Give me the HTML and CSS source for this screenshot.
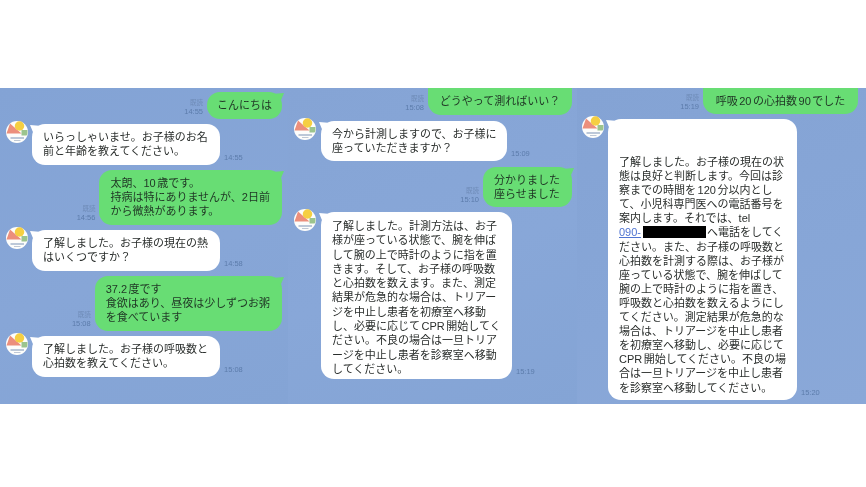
FILE: index.html
```html
<!doctype html>
<html lang="ja">
  <head>
    <meta charset="utf-8">
    <title>チャット</title>
    <link rel="stylesheet" href="styles.css">
  </head>
  <body>
    <svg class="defs" width="0" height="0">
      <symbol id="avatar" viewBox="0 0 44 44">
        <circle cx="22" cy="22" r="22" fill="#fdfdfb"/>
        <path d="M1 25 L8 5 L31 25 Z" fill="#ec8f7c"/>
        <circle cx="27" cy="10" r="9.5" fill="#f5cf42"/>
        <path d="M31 18 h12 v6 q0 3 -2 5 h-10 Z" fill="#9cc48e"/>
        <rect x="9" y="33" width="27" height="2" fill="#7d93b5"/>
        <rect x="16" y="38" width="13" height="1.5" fill="#aab6c9"/>
      </symbol>
    </svg>
    <main class="strip">
      <section class="chat chat-one">
        <div class="row mine">
          <div class="meta"><span class="read">既読</span><span>14:55</span></div>
          <div class="bubble green hello">こんにちは</div>
        </div>
        <div class="row theirs">
          <svg class="avatar"><use href="#avatar"/></svg>
          <div class="bubble white w-188">いらっしゃいませ。お子様のお名<br>前と年齢を教えてください。</div>
          <div class="meta"><span>14:55</span></div>
        </div>
        <div class="row mine">
          <div class="meta"><span class="read">既読</span><span>14:56</span></div>
          <div class="bubble green">太朗、10 歳です。<br>持病は特にありませんが、2日前<br>から微熱があります。</div>
        </div>
        <div class="row theirs">
          <svg class="avatar"><use href="#avatar"/></svg>
          <div class="bubble white w-188">了解しました。お子様の現在の熱<br>はいくつですか？</div>
          <div class="meta"><span>14:58</span></div>
        </div>
        <div class="row mine">
          <div class="meta"><span class="read">既読</span><span>15:08</span></div>
          <div class="bubble green">37.2 度です<br>食欲はあり、昼夜は少しずつお粥<br>を食べています</div>
        </div>
        <div class="row theirs">
          <svg class="avatar"><use href="#avatar"/></svg>
          <div class="bubble white w-188">了解しました。お子様の呼吸数と<br>心拍数を教えてください。</div>
          <div class="meta"><span>15:08</span></div>
        </div>
      </section>

      <section class="chat chat-two">
        <div class="row mine">
          <div class="meta"><span class="read">既読</span><span>15:08</span></div>
          <div class="bubble green cut w-144">どうやって測ればいい？</div>
        </div>
        <div class="row theirs">
          <svg class="avatar"><use href="#avatar"/></svg>
          <div class="bubble white w-186">今から計測しますので、お子様に<br>座っていただきますか？</div>
          <div class="meta"><span>15:09</span></div>
        </div>
        <div class="row mine">
          <div class="meta"><span class="read">既読</span><span>15:10</span></div>
          <div class="bubble green">分かりました<br>座らせました</div>
        </div>
        <div class="row theirs">
          <svg class="avatar"><use href="#avatar"/></svg>
          <div class="bubble white w-191 tall">了解しました。計測方法は、お子<br>様が座っている状態で、腕を伸ば<br>して腕の上で時計のように指を置<br>きます。そして、お子様の呼吸数<br>と心拍数を数えます。また、測定<br>結果が危急的な場合は、トリアー<br>ジを中止し患者を初療室へ移動<br>し、必要に応じて CPR 開始してく<br>ださい。不良の場合は一旦トリア<br>ージを中止し患者を診察室へ移動<br>してください。</div>
          <div class="meta"><span>15:19</span></div>
        </div>
      </section>

      <section class="chat chat-three">
        <div class="row mine">
          <div class="meta"><span class="read">既読</span><span>15:19</span></div>
          <div class="bubble green cut w-155">呼吸 20 の心拍数 90 でした</div>
        </div>
        <div class="row theirs">
          <svg class="avatar"><use href="#avatar"/></svg>
          <div class="bubble white w-189 long">了解しました。お子様の現在の状<br>態は良好と判断します。今回は診<br>察までの時間を 120 分以内とし<br>て、小児科専門医への電話番号を<br>案内します。それでは、tel<br><a class="phone" href="#">090-</a><span class="blackout"></span>へ電話をしてく<br>ださい。また、お子様の呼吸数と<br>心拍数を計測する際は、お子様が<br>座っている状態で、腕を伸ばして<br>腕の上で時計のように指を置き、<br>呼吸数と心拍数を数えるようにし<br>てください。測定結果が危急的な<br>場合は、トリアージを中止し患者<br>を初療室へ移動し、必要に応じて<br>CPR 開始してください。不良の場<br>合は一旦トリアージを中止し患者<br>を診察室へ移動してください。</div>
          <div class="meta"><span>15:20</span></div>
        </div>
      </section>
    </main>
  </body>
</html>
```

FILE: styles.css
```css
* {
  box-sizing: border-box;
}
html, body {
  margin: 0;
  height: 100%;
  background: #fff;
}
body {
  width: 866px;
  height: 487px;
  padding-top: 88px;
  overflow: hidden;
  font-family: "Liberation Sans", "Noto Sans CJK JP", sans-serif;
}
.defs {
  display: block;
  height: 0;
}
.strip {
  display: flex;
  height: 316px;
  filter: blur(0.35px);
}
.chat {
  display: flex;
  flex-direction: column;
  gap: 5px;
  overflow: hidden;
}
.chat-one {
  width: 288px;
  padding: 4px 6px 0 6px;
  background: linear-gradient(160deg, #83a3d5 0%, #87a6d7 55%, #84a4d5 100%);
}
.chat-two {
  width: 289px;
  padding: 0 5px 0 6px;
  gap: 6px;
  background: linear-gradient(160deg, #85a4d5 0%, #88a7d8 55%, #84a4d5 100%);
}
.chat-two .row:nth-child(4) {
  margin-top: -1px;
}
.chat-two .avatar {
  margin-right: 1px;
}
.chat-two .bubble {
  padding-bottom: 6px;
}
.chat-three {
  width: 289px;
  padding: 0 8px 0 5px;
  background: linear-gradient(160deg, #84a3d4 0%, #87a6d7 60%, #8aa8d8 100%);
}

.row {
  display: flex;
  align-items: flex-end;
  gap: 4px;
}
.mine {
  justify-content: flex-end;
}

.avatar {
  flex: none;
  align-self: flex-start;
  width: 22px;
  height: 22px;
  margin-top: -3px;
}

.bubble {
  position: relative;
  padding: 6px 12px 7px 11px;
  border-radius: 13px;
  font-size: 11px;
  line-height: 14px;
  word-spacing: -1.5px;
  color: #2a2e2c;
  white-space: nowrap;
}
.bubble::after {
  content: "";
  position: absolute;
  top: 1px;
  width: 12px;
  height: 10px;
}
.green {
  background: #68dd74;
  color: #1f3524;
}
.green::after {
  right: -2px;
  background: #68dd74;
  clip-path: polygon(100% 0, 0 10%, 0 100%, 65% 100%);
}
.white {
  background: #fff;
}
.white::after {
  left: -2px;
  background: #fff;
  clip-path: polygon(0 0, 100% 10%, 100% 100%, 35% 100%);
}
.hello {
  width: 75px;
  padding-left: 0;
  padding-right: 0;
  text-align: center;
}
.cut {
  padding: 6px 0 7px;
  border-radius: 0 0 13px 13px;
  text-align: center;
}
.chat-two .cut {
  padding-bottom: 7px;
}
.chat-three .cut {
  padding-bottom: 6px;
}
.cut::after {
  display: none;
}
.w-144 {
  width: 144px;
}
.w-155 {
  width: 155px;
}
.w-186 {
  width: 186px;
}
.w-188 {
  width: 188px;
}
.w-189 {
  width: 189px;
}
.w-191 {
  width: 191px;
}
.chat-two .tall {
  padding: 7px 11px 3px;
  line-height: 14.3px;
}
.long {
  padding: 36px 11px 5px;
  line-height: 14.1px;
}

.meta {
  display: flex;
  flex-direction: column;
  align-items: flex-end;
  font-size: 7.5px;
  line-height: 9px;
  color: #5c7cab;
  padding-bottom: 3px;
}
.read {
  font-size: 6.5px;
  color: #6f8cb8;
}

.phone {
  color: #4f74d2;
}
.blackout {
  display: inline-block;
  width: 63px;
  height: 12px;
  margin: 0 1px 0 2px;
  vertical-align: -2px;
  background: #000;
}
```
